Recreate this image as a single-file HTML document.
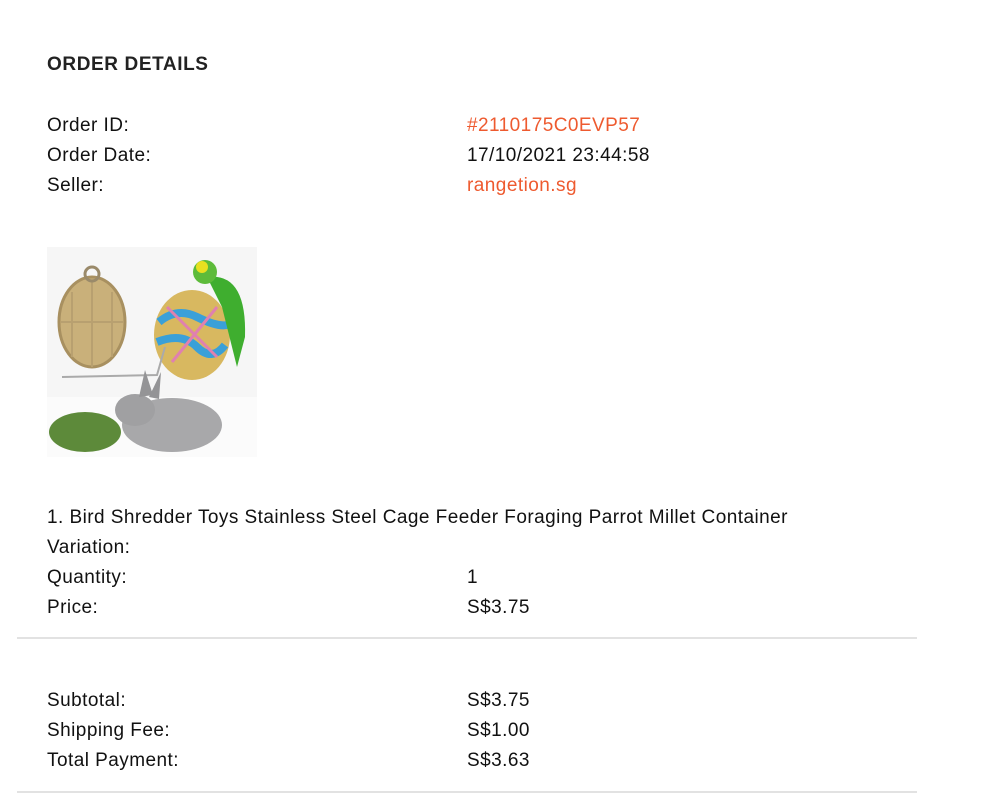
<!DOCTYPE html>
<html><head><meta charset="utf-8"><style>
body{margin:0;background:#fff;width:1008px;height:800px;position:relative;overflow:hidden;font-family:"Liberation Sans",Arial,sans-serif;font-size:19px;color:#111}
.t{position:absolute;line-height:22px;white-space:nowrap;letter-spacing:0.45px}
.o{color:#ee5a2f}
.h{font-weight:bold;color:#222;letter-spacing:0.6px}
.line{position:absolute;left:17px;width:900px;height:2px;background:#e2e2e2}
</style></head><body>
<div class="t h" style="left:47px;top:54px">ORDER DETAILS</div>
<div class="t" style="left:47px;top:115px">Order ID:</div><div class="t o" style="left:467px;top:115px">#2110175C0EVP57</div>
<div class="t" style="left:47px;top:145px">Order Date:</div><div class="t" style="left:467px;top:145px">17/10/2021 23:44:58</div>
<div class="t" style="left:47px;top:175px">Seller:</div><div class="t o" style="left:467px;top:175px">rangetion.sg</div>
<svg style="position:absolute;left:47px;top:247px" width="210" height="210" viewBox="0 0 210 210">
<rect width="210" height="210" fill="#f6f6f6"/>
<rect y="150" width="210" height="60" fill="#fbfbfb"/>
<ellipse cx="45" cy="75" rx="33" ry="45" fill="#c9b07a"/>
<ellipse cx="45" cy="75" rx="33" ry="45" fill="none" stroke="#a89060" stroke-width="3"/>
<path d="M25 45 V110 M45 35 V120 M65 45 V110 M14 75 H76" stroke="#b8a070" stroke-width="2"/>
<circle cx="45" cy="27" r="7" fill="none" stroke="#9a8a6a" stroke-width="3"/>
<ellipse cx="145" cy="88" rx="38" ry="45" fill="#d8b860"/>
<path d="M112 75 Q130 60 150 70 T180 78 M110 95 Q135 85 150 100 T178 98" stroke="#3aa0d8" stroke-width="8" fill="none"/>
<path d="M120 60 L170 110 M170 60 L125 115" stroke="#e080b0" stroke-width="3"/>
<path d="M15 130 L110 128 L118 100" stroke="#aaa" stroke-width="2" fill="none"/>
<path d="M160 30 Q200 25 198 90 L190 120 L175 60 Z" fill="#3fae2f"/>
<circle cx="158" cy="25" r="12" fill="#5dbb3a"/><circle cx="155" cy="20" r="6" fill="#e8e020"/>
<ellipse cx="125" cy="178" rx="50" ry="27" fill="#a8a8aa"/>
<ellipse cx="88" cy="163" rx="20" ry="16" fill="#a0a0a2"/>
<path d="M92 150 L98 123 L106 148 Z M102 150 L114 125 L112 152 Z" fill="#949496"/>
<ellipse cx="38" cy="185" rx="36" ry="20" fill="#5d8a3a"/>
</svg>
<div class="t" style="left:47px;top:507px">1. Bird Shredder Toys Stainless Steel Cage Feeder Foraging Parrot Millet Container</div>
<div class="t" style="left:47px;top:537px">Variation:</div>
<div class="t" style="left:47px;top:567px">Quantity:</div><div class="t" style="left:467px;top:567px">1</div>
<div class="t" style="left:47px;top:597px">Price:</div><div class="t" style="left:467px;top:597px">S$3.75</div>
<div class="line" style="top:637px"></div>
<div class="t" style="left:47px;top:690px">Subtotal:</div><div class="t" style="left:467px;top:690px">S$3.75</div>
<div class="t" style="left:47px;top:720px">Shipping Fee:</div><div class="t" style="left:467px;top:720px">S$1.00</div>
<div class="t" style="left:47px;top:750px">Total Payment:</div><div class="t" style="left:467px;top:750px">S$3.63</div>
<div class="line" style="top:791px"></div>
</body></html>
